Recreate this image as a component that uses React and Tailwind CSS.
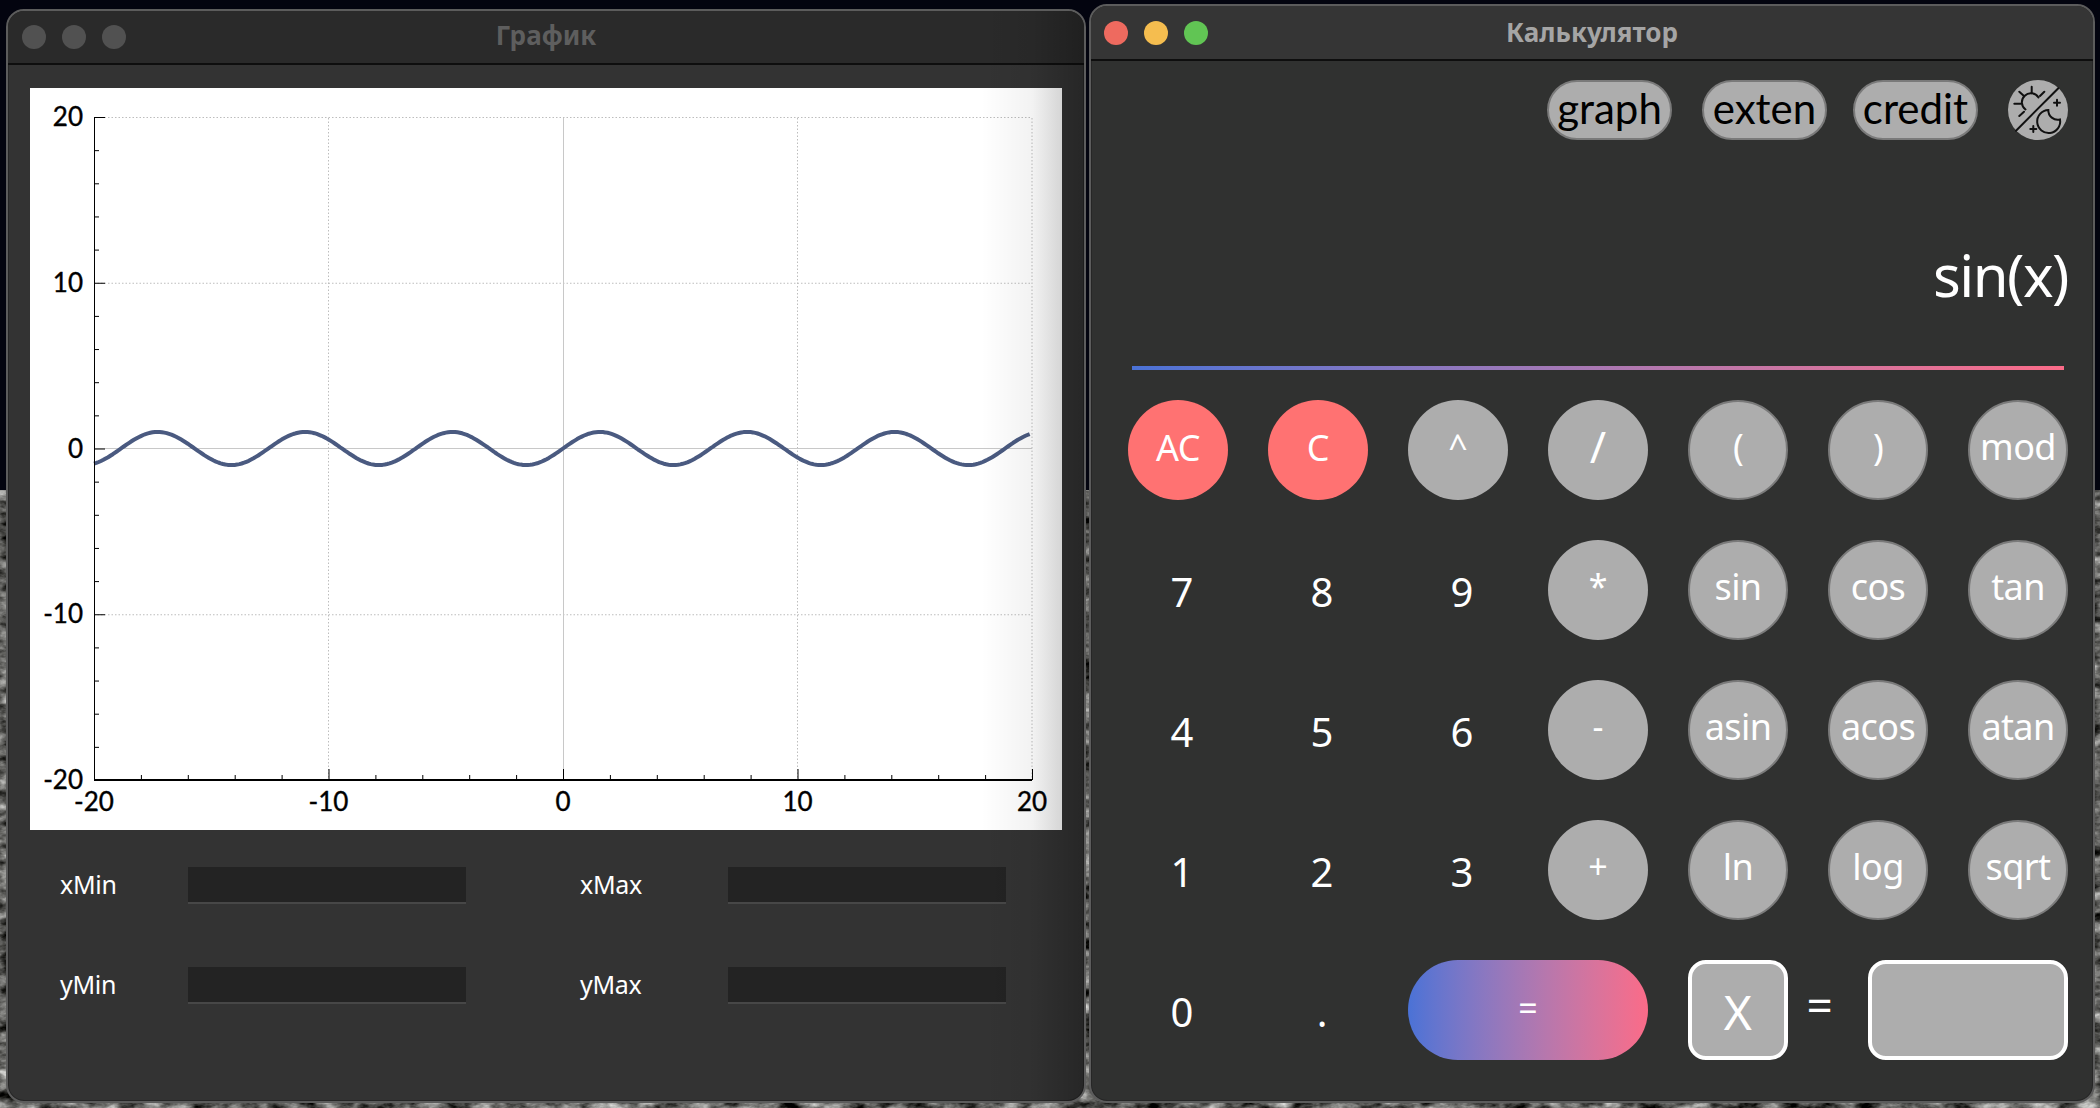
import { useMemo } from 'react';

const FONT = "font-['Noto_Sans',sans-serif]";

const PLOT = { left: 94, right: 1032, top: 117, bottom: 780 };

const px = (v) => PLOT.left + ((v + 20) / 40) * (PLOT.right - PLOT.left);
const py = (v) => PLOT.top + ((20 - v) / 40) * (PLOT.bottom - PLOT.top);

const MAJOR = [-20, -10, 0, 10, 20];
const MINOR = [-18, -16, -14, -12, -8, -6, -4, -2, 2, 4, 6, 8, 12, 14, 16, 18];

function Plot() {
  const curve = useMemo(() => {
    const pts = [];
    for (let x = -20; x <= 20; x += 0.1) pts.push(`${px(x).toFixed(1)},${py(Math.sin(x)).toFixed(1)}`);
    return 'M' + pts.join(' L');
  }, []);

  return (
    <svg viewBox="30 88 1032 742" className="block w-full h-full font-['Lato',sans-serif] text-[26px]">
      {[-10, 10, 20].map((v) => (
        <line key={v} x1={px(v)} x2={px(v)} y1={PLOT.top + 1} y2={PLOT.bottom} stroke="#bdbdbd" strokeWidth="1" strokeDasharray="1.5 2" />
      ))}
      {[20, 10, -10].map((v) => (
        <line key={v} x1={PLOT.left} x2={PLOT.right} y1={py(v) + 0.5} y2={py(v) + 0.5} stroke="#bdbdbd" strokeWidth="1" strokeDasharray="1.5 2" />
      ))}
      <line x1={px(0) + 0.5} x2={px(0) + 0.5} y1={PLOT.top + 1} y2={PLOT.bottom} stroke="#c8c8c8" strokeWidth="1" />
      <line x1={PLOT.left} x2={PLOT.right} y1={py(0)} y2={py(0)} stroke="#c8c8c8" strokeWidth="1" />

      <path d={curve} fill="none" stroke="#4a5a80" strokeWidth="4" strokeLinejoin="round" />

      <line x1={PLOT.left + 0.5} x2={PLOT.left + 0.5} y1={PLOT.top} y2={PLOT.bottom} stroke="#000" strokeWidth="1" />
      <line x1={PLOT.left} x2={PLOT.right} y1={PLOT.bottom} y2={PLOT.bottom} stroke="#000" strokeWidth="2" />
      {MAJOR.map((v) => (
        <g key={v} stroke="#000" strokeWidth="1">
          <line x1={px(v) + 0.5} x2={px(v) + 0.5} y1={PLOT.bottom - 11} y2={PLOT.bottom} />
          <line x1={PLOT.left} x2={PLOT.left + 11} y1={py(v) + 0.5} y2={py(v) + 0.5} />
        </g>
      ))}
      {MINOR.map((v) => (
        <g key={v} stroke="#000" strokeWidth="1">
          <line x1={px(v) + 0.5} x2={px(v) + 0.5} y1={PLOT.bottom - 5} y2={PLOT.bottom} />
          <line x1={PLOT.left} x2={PLOT.left + 5} y1={py(v) + 0.5} y2={py(v) + 0.5} />
        </g>
      ))}
      {MAJOR.map((v) => (
        <text key={v} x={83} y={py(v) + 9} textAnchor="end" fill="#000" stroke="#000" strokeWidth="0.4">{v}</text>
      ))}
      {MAJOR.map((v) => (
        <text key={v} x={px(v)} y={811} textAnchor="middle" fill="#000" stroke="#000" strokeWidth="0.4">{v}</text>
      ))}
    </svg>
  );
}

function Lights({ dim }) {
  const colors = dim ? ['bg-[#515151]', 'bg-[#515151]', 'bg-[#515151]'] : ['bg-[#ee6a5f]', 'bg-[#f5bd4f]', 'bg-[#61c554]'];
  return (
    <div className="flex gap-4">
      {colors.map((c, i) => <span key={i} className={`w-6 h-6 rounded-full ${c}`} />)}
    </div>
  );
}

function RangeField({ label, className }) {
  return (
    <div className={`flex items-center ${className}`}>
      <span className="w-[128px] text-[25px] tracking-[-0.3px] text-white leading-none -mt-0.5">{label}</span>
      <div className="w-[278px] h-[37px] bg-[#232323] border-b-2 border-[#474747]" />
    </div>
  );
}

function GraphWindow() {
  return (
    <section className="relative z-10 w-[1080px] h-[1094px] mt-[9px] rounded-[18px] bg-[#333333] border-2 border-[#5c5c5c] shadow-[inset_0_0_0_1px_#262626] overflow-hidden flex flex-col">
      <header className="h-[54px] shrink-0 bg-[#2a2a2a] border-b-2 border-[#0e0e0e] grid grid-cols-[1fr_auto_1fr] items-center px-[14px]">
        <Lights dim />
        <h1 className="text-[26px] font-bold text-[#5e5e5e] leading-none pb-1">График</h1>
      </header>
      <div className="ml-[22px] mt-[23px] w-[1032px] h-[742px] bg-white shrink-0">
        <Plot />
      </div>
      <div className="ml-[52px] mt-[37px] grid grid-cols-[520px_auto] gap-y-[63px] justify-start">
        <RangeField label="xMin" />
        <RangeField label="xMax" className="[&>span]:w-[148px]" />
        <RangeField label="yMin" />
        <RangeField label="yMax" className="[&>span]:w-[148px]" />
      </div>
      {/* shadow thrown by the calculator window */}
      <div className="absolute inset-y-0 right-0 w-[103px] bg-gradient-to-r from-transparent via-black/5 to-black/25 pointer-events-none" />
    </section>
  );
}

function ThemeIcon() {
  return (
    <button className="w-[60px] h-[60px] ml-[30px] rounded-full bg-[#adadad]">
      <svg viewBox="0 0 60 60" className="w-full h-full" fill="none" stroke="#111" strokeWidth="2" strokeLinecap="round">
        <path d="M50.3 8.3 8 50.7" />
        <path d="M30.5 17.5A9 9 0 1 0 17.5 29.5" />
        <path d="M23.7 6.7v6.6M6.3 23.7h6.4M11.3 11.7 16 16M36.3 11.7 32 16M11.3 36l4.7-4.3" />
        <path d="M40.3 30A11.5 11.5 0 1 0 52 39.5 9.5 9.5 0 0 1 40.3 30Z" />
        <path d="M49 19.7v6M46 22.7h6M25.3 46v6M22.3 49h6" />
      </svg>
    </button>
  );
}

function Pill({ children, className = '' }) {
  return (
    <button className={`w-[125px] h-[60px] rounded-[30px] bg-[#adadad] border-2 border-[#7a7a7a] text-black text-[42px] leading-none font-['Lato',sans-serif] pb-1 ${className}`}>
      {children}
    </button>
  );
}

function Key({ label, tone = 'plain' }) {
  const tones = {
    plain: 'text-[40px] pt-1 pl-2',
    red: 'bg-[#ff7272] text-[36px] tracking-[-0.5px] pb-1',
    op: `bg-[#adadad] pb-2 ${label === '/' ? 'text-[44px]' : 'text-[34px]'}`,
    fn: 'bg-[#adadad] border-2 border-[#7a7a7a] text-[36px] tracking-[-0.6px] pb-1.5',
  };
  return (
    <button className={`h-[100px] rounded-full text-white leading-none flex items-center justify-center ${tones[tone]}`}>
      {label}
    </button>
  );
}

const ROWS = [
  [['AC', 'red'], ['C', 'red'], ['^', 'op'], ['/', 'op'], ['(', 'fn'], [')', 'fn'], ['mod', 'fn']],
  [['7'], ['8'], ['9'], ['*', 'op'], ['sin', 'fn'], ['cos', 'fn'], ['tan', 'fn']],
  [['4'], ['5'], ['6'], ['-', 'op'], ['asin', 'fn'], ['acos', 'fn'], ['atan', 'fn']],
  [['1'], ['2'], ['3'], ['+', 'op'], ['ln', 'fn'], ['log', 'fn'], ['sqrt', 'fn']],
];

function CalcWindow() {
  return (
    <section className="relative z-10 w-[1006px] h-[1099px] mt-[4px] ml-[3px] rounded-[18px] bg-[#303130] border-2 border-[#5c5c5c] shadow-[inset_0_0_0_1px_#262626] overflow-hidden flex flex-col">
      <header className="h-[55px] shrink-0 bg-[#353535] border-b-2 border-[#0e0e0e] grid grid-cols-[1fr_auto_1fr] items-center px-[13px]">
        <Lights />
        <h1 className="text-[26px] font-bold text-[#a5a5a5] leading-none pb-0.5">Калькулятор</h1>
      </header>
      <div className="flex justify-end items-center mt-[19px] pr-[25px]">
        <Pill>graph</Pill>
        <Pill className="ml-[30px]">exten</Pill>
        <Pill className="ml-[26px]">credit</Pill>
        <ThemeIcon />
      </div>
      <output className="block text-right text-white text-[58px] tracking-[-1.5px] leading-none h-[54px] mt-[106px] pr-[25px]">sin(x)</output>
      <div className="ml-[41px] mt-[66px] w-[932px] h-1 shrink-0 bg-gradient-to-r from-[#4a72d6] to-[#fb6b88]" />
      <div className="ml-[37px] mt-[30px] w-[940px] grid grid-cols-[repeat(7,100px)] auto-rows-[100px] gap-10">
        {ROWS.flat().map(([label, tone]) => <Key key={label} label={label} tone={tone} />)}
        <Key label="0" />
        <Key label="." />
        <button className="col-span-2 h-[100px] rounded-full bg-gradient-to-r from-[#4a72d6] to-[#fb6b88] text-white text-[34px] leading-none pb-1">=</button>
        <div className="col-span-3 flex items-center">
          <div className="w-[100px] h-[100px] rounded-[18px] border-4 border-white bg-[#adadad] text-white text-[48px] leading-none flex items-center justify-center pt-1">X</div>
          <span className="w-[64px] mr-4 text-center text-white text-[46px] leading-none -mt-3">=</span>
          <div className="w-[201px] h-[100px] rounded-[18px] border-4 border-white bg-[#adadad]" />
        </div>
      </div>
    </section>
  );
}

function Wallpaper() {
  return (
    <svg className="absolute left-0 top-[490px] w-[2100px] h-[618px]">
      <filter id="rock" colorInterpolationFilters="sRGB">
        <feTurbulence type="fractalNoise" baseFrequency="0.05 0.09" numOctaves="4" seed="4" />
        <feColorMatrix values="1.3 0 0 0 -0.27 1.3 0 0 0 -0.27 1.3 0 0 0 -0.28 0 0 0 0 1" />
      </filter>
      <rect width="2100" height="618" filter="url(#rock)" />
    </svg>
  );
}

export default function App() {
  return (
    <div className={`relative w-[2100px] h-[1108px] overflow-hidden flex items-start pl-[6px] bg-[#03040f] ${FONT}`}>
      <Wallpaper />
      <GraphWindow />
      <CalcWindow />
    </div>
  );
}
